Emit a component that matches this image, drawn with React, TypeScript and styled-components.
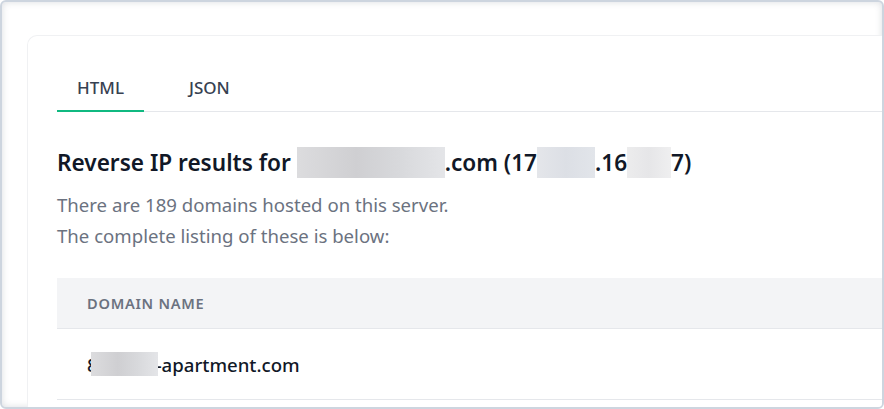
import { useState } from "react";
import styled, { createGlobalStyle } from "styled-components";

const GlobalStyle = createGlobalStyle`
  html, body {
    margin: 0;
    padding: 0;
    background: #ffffff;
  }
  body {
    font-family: "Noto Sans", "Open Sans", "Liberation Sans", sans-serif;
    color: #111827;
  }
  * {
    box-sizing: border-box;
  }
`;

const Frame = styled.div`
  width: 884px;
  height: 409px;
  border: 2px solid #cdd5df;
  border-radius: 6px;
  box-shadow: inset 0 0 7px rgba(60, 70, 90, 0.18);
  background: #ffffff;
  overflow: hidden;
  padding: 33px 0 0 25px;
`;

const Card = styled.div`
  width: 900px;
  min-height: 420px;
  background: #ffffff;
  border: 1px solid #f0f1f3;
  border-right: none;
  border-radius: 10px 0 0 0;
  padding: 40px 0 0 29px;
`;

const TabList = styled.div`
  display: flex;
  gap: 25px;
  border-bottom: 1px solid #e5e7eb;
`;

const Tab = styled.button<{ $active?: boolean }>`
  font-family: inherit;
  font-size: 17px;
  font-weight: 500;
  line-height: 24px;
  color: #374151;
  background: none;
  border: none;
  border-bottom: 2px solid ${(p) => (p.$active ? "#10b981" : "transparent")};
  margin-bottom: -1px;
  padding: 0 20px 10px;
  cursor: pointer;
`;

const Heading = styled.h2`
  margin: 35px 0 0;
  font-size: 22.6px;
  line-height: 30px;
  font-weight: 600;
  color: #111827;
  display: flex;
  align-items: center;
`;

const Blur = styled.span<{ $w: number; $tone?: "grey" | "blue" | "light" }>`
  display: inline-block;
  width: ${(p) => p.$w}px;
  height: 31px;
  background: ${(p) =>
    p.$tone === "light"
      ? "linear-gradient(90deg, #ececed, #e6e6e8 50%, #efeff0)"
      : p.$tone === "blue"
        ? "linear-gradient(90deg, #e4e6ea, #dcdfe5 50%, #e2e5ea)"
        : "linear-gradient(90deg, #dcdcde, #cfcfd2 40%, #d8d9dc 70%, #e4e5e8)"};
  filter: blur(0.6px);
`;

const Note = styled.p`
  margin: 11px 0 0;
  font-size: 18.6px;
  line-height: 31px;
  color: #6b7280;
`;

const Table = styled.div`
  margin-top: 27px;
`;

const HeadRow = styled.div`
  height: 51px;
  display: flex;
  align-items: center;
  padding-left: 30px;
  background: #f3f4f6;
  border-bottom: 1px solid #e5e7eb;
  font-size: 14.6px;
  font-weight: 600;
  letter-spacing: 0.05em;
  text-transform: uppercase;
  color: #6b7280;
`;

const Row = styled.div`
  height: 71px;
  display: flex;
  align-items: center;
  padding-left: 30px;
  border-bottom: 1px solid #e5e7eb;
  font-size: 18.6px;
  font-weight: 500;
  color: #111827;
`;

const RowBlur = styled(Blur)`
  height: 24px;
  margin-left: -7px;
  margin-right: -2px;
  position: relative;
  z-index: 1;
`;

export default function App() {
  const [tab, setTab] = useState("html");
  return (
    <>
      <GlobalStyle />
      <Frame>
        <Card>
          <TabList>
            <Tab $active={tab === "html"} onClick={() => setTab("html")}>
              HTML
            </Tab>
            <Tab $active={tab === "json"} onClick={() => setTab("json")}>
              JSON
            </Tab>
          </TabList>
          <Heading>
            Reverse IP results for&nbsp;
            <Blur $w={148} />
            .com (17
            <Blur $w={58} $tone="blue" />
            .16
            <Blur $w={44} $tone="light" />
            7)
          </Heading>
          <Note>
            There are 189 domains hosted on this server.
            <br />
            The complete listing of these is below:
          </Note>
          <Table>
            <HeadRow>Domain Name</HeadRow>
            <Row>
              8<RowBlur $w={67} />
              -apartment.com
            </Row>
          </Table>
        </Card>
      </Frame>
    </>
  );
}
